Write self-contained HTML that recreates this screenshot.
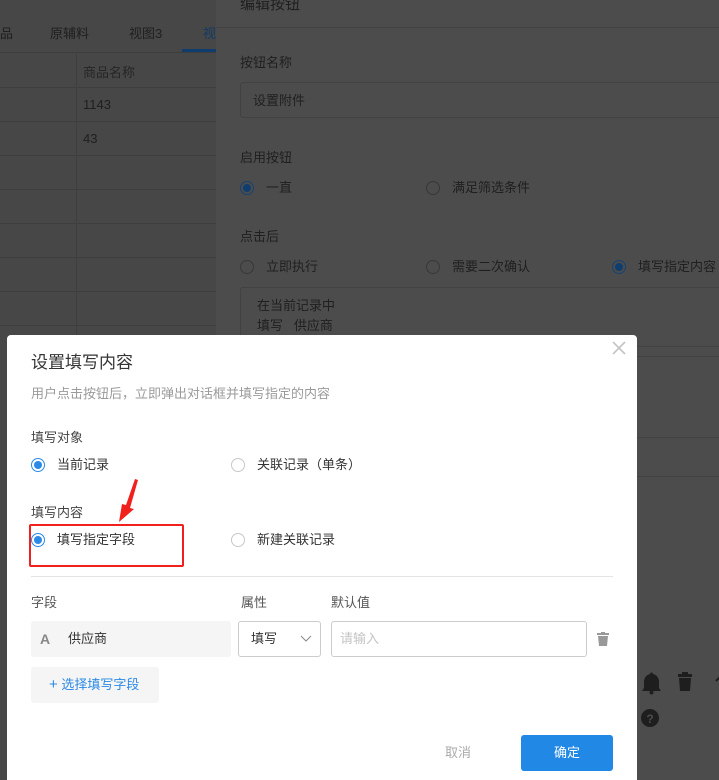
<!DOCTYPE html>
<html><head><meta charset="utf-8"><style>
*{box-sizing:border-box;margin:0;padding:0}
html,body{width:719px;height:780px;overflow:hidden;background:#474747}
body{position:relative;font-family:"Liberation Sans","Noto Sans CJK SC",sans-serif;font-size:13px;line-height:16px;color:#1f1f1f}
.a{position:absolute}
.hl{position:absolute;height:1px;background:#3e3e3e}
.rd{position:absolute;width:14px;height:14px;border-radius:50%;border:1px solid #383838;background:#4c4c4c}
.rdon{border:1px solid #154273}
.rdon:after{content:"";position:absolute;left:2px;top:2px;width:8px;height:8px;border-radius:50%;background:#0f3d6e}
.mr{position:absolute;width:14px;height:14px;border-radius:50%;border:1px solid #c8c8c8;background:#fff}
.mron{border:1px solid #2b8ae6}
.mron:after{content:"";position:absolute;left:2px;top:2px;width:8px;height:8px;border-radius:50%;background:#2b8ae6}
.m{color:#333}
</style></head><body>
<div class="a" style="left:0;top:0;width:216px;height:780px;background:#474747"></div>
<div class="a" style="left:0;top:26px;">品</div>
<div class="a" style="left:50px;top:26px;">原辅料</div>
<div class="a" style="left:129px;top:26px;">视图3</div>
<div class="a" style="left:203px;top:26px;color:#123a66">视</div>
<div class="a" style="left:182px;top:49px;width:34px;height:3px;background:#0f3d6e"></div>
<div class="hl" style="left:0;top:52px;width:216px"></div>
<div class="a" style="left:76px;top:52px;width:1px;height:290px;background:#3e3e3e"></div>
<div class="a" style="left:83px;top:65px;color:#262626">商品名称</div>
<div class="hl" style="left:0;top:87px;width:216px"></div>
<div class="a" style="left:83px;top:97px;">1143</div>
<div class="hl" style="left:0;top:121px;width:216px"></div>
<div class="a" style="left:83px;top:131px;">43</div>
<div class="hl" style="left:0;top:155px;width:216px"></div>
<div class="hl" style="left:0;top:189px;width:216px"></div>
<div class="hl" style="left:0;top:223px;width:216px"></div>
<div class="hl" style="left:0;top:257px;width:216px"></div>
<div class="hl" style="left:0;top:291px;width:216px"></div>
<div class="hl" style="left:0;top:325px;width:216px"></div>
<div class="a" style="left:216px;top:0;width:503px;height:780px;background:#4c4c4c"></div>
<div class="a" style="left:240px;top:-3px;font-size:15px;">编辑按钮</div>
<div class="hl" style="left:216px;top:27px;width:503px;background:#424242"></div>
<div class="a" style="left:240px;top:55px;">按钮名称</div>
<div class="a" style="left:240px;top:82px;width:490px;height:36px;border:1px solid #424242;border-radius:3px"></div>
<div class="a" style="left:253px;top:93px;">设置附件</div>
<div class="a" style="left:240px;top:150px;">启用按钮</div>
<div class="rd rdon" style="left:240px;top:181px"></div>
<div class="a" style="left:266px;top:180px;">一直</div>
<div class="rd" style="left:426px;top:181px"></div>
<div class="a" style="left:452px;top:180px;">满足筛选条件</div>
<div class="a" style="left:240px;top:229px;">点击后</div>
<div class="rd" style="left:240px;top:260px"></div>
<div class="a" style="left:266px;top:259px;">立即执行</div>
<div class="rd" style="left:426px;top:260px"></div>
<div class="a" style="left:452px;top:259px;">需要二次确认</div>
<div class="rd rdon" style="left:612px;top:260px"></div>
<div class="a" style="left:638px;top:259px;">填写指定内容</div>
<div class="a" style="left:240px;top:287px;width:490px;height:70px;border:1px solid #424242;border-radius:3px"></div>
<div class="a" style="left:257px;top:298px;">在当前记录中</div>
<div class="a" style="left:257px;top:318px;">填写&nbsp;&nbsp;&nbsp;供应商</div>
<div class="hl" style="left:637px;top:346px;width:82px;background:#424242"></div>
<div class="hl" style="left:637px;top:437px;width:82px;background:#424242"></div>
<div class="hl" style="left:637px;top:476px;width:82px;background:#424242"></div>
<svg class="a" style="left:640px;top:671px" width="80" height="60" viewBox="0 0 80 60">
<path d="M10 3a1.5 1.5 0 0 1 3 0c4 1 6 4 6 8v6l2 3H2l2-3v-6c0-4 2-7 6-8z" fill="#1e1e1e"/><circle cx="11.5" cy="21.5" r="2" fill="#1e1e1e"/>
<rect x="38" y="3" width="14" height="3" fill="#1e1e1e"/><rect x="42" y="1" width="6" height="2" fill="#1e1e1e"/><path d="M39 7h12l-1 13H40z" fill="#1e1e1e"/>
<path d="M76 10l4-4" stroke="#1e1e1e" stroke-width="2"/>
<circle cx="10" cy="47" r="9" fill="#1e1e1e"/><text x="10" y="52" font-size="12" font-weight="bold" text-anchor="middle" fill="#4c4c4c" font-family="Liberation Sans">?</text>
</svg>
<div class="a" style="left:7px;top:335px;width:630px;height:445px;background:#fff;border-radius:4px 4px 0 0"></div>
<svg class="a" style="left:612px;top:341px" width="14" height="14"><path d="M1 1L13 13M13 1L1 13" stroke="#c4c4c4" stroke-width="1.6"/></svg>
<div class="a m" style="left:31px;top:353px;font-size:17px;line-height:20px">设置填写内容</div>
<div class="a" style="left:31px;top:386px;color:#9a9a9a">用户点击按钮后，立即弹出对话框并填写指定的内容</div>
<div class="a" style="left:31px;top:430px;color:#444">填写对象</div>
<div class="mr mron" style="left:31px;top:458px"></div>
<div class="a m" style="left:57px;top:457px;">当前记录</div>
<div class="mr" style="left:231px;top:458px"></div>
<div class="a m" style="left:257px;top:457px;">关联记录（单条）</div>
<div class="a" style="left:31px;top:505px;color:#444">填写内容</div>
<div class="mr mron" style="left:31px;top:533px"></div>
<div class="a m" style="left:57px;top:532px;">填写指定字段</div>
<div class="mr" style="left:231px;top:533px"></div>
<div class="a m" style="left:257px;top:532px;">新建关联记录</div>
<div class="a" style="left:29px;top:524px;width:155px;height:43px;border:2px solid #f0201c;border-radius:2px"></div>
<svg class="a" style="left:110px;top:478px" width="30" height="46"><path d="M28 2L20 30l4 1L9 44 12 26l4 1L25 1z" fill="#f0201c"/></svg>
<div class="a" style="left:31px;top:576px;width:582px;height:1px;background:#e4e4e4"></div>
<div class="a" style="left:31px;top:595px;color:#555">字段</div>
<div class="a" style="left:241px;top:595px;color:#555">属性</div>
<div class="a" style="left:331px;top:595px;color:#555">默认值</div>
<div class="a" style="left:31px;top:621px;width:200px;height:36px;background:#f5f5f5;border-radius:3px"></div>
<div class="a" style="left:40px;top:631px;font-weight:bold;color:#888;font-size:14px">A</div>
<div class="a m" style="left:68px;top:631px;">供应商</div>
<div class="a" style="left:238px;top:621px;width:83px;height:36px;border:1px solid #ccc;border-radius:3px"></div>
<div class="a m" style="left:251px;top:631px;">填写</div>
<svg class="a" style="left:300px;top:635px" width="12" height="8"><path d="M1 1l5 5 5-5" stroke="#888" fill="none"/></svg>
<div class="a" style="left:331px;top:621px;width:256px;height:36px;border:1px solid #ccc;border-radius:3px"></div>
<div class="a" style="left:340px;top:631px;color:#c4c4c4">请输入</div>
<svg class="a" style="left:597px;top:632px" width="12" height="14"><rect x="0" y="1" width="12" height="2" fill="#999"/><rect x="4" y="0" width="4" height="1.5" fill="#999"/><path d="M1 4h10l-1 10H2z" fill="#999"/></svg>
<div class="a" style="left:31px;top:667px;width:128px;height:36px;background:#f5f5f5;border-radius:3px"></div>
<div class="a" style="left:49px;top:677px;color:#2b8ae6"><span style="font-size:15px">+</span> 选择填写字段</div>
<div class="a" style="left:445px;top:745px;color:#aaa">取消</div>
<div class="a" style="left:521px;top:735px;width:92px;height:36px;background:#2288e6;border-radius:3px;color:#fff;text-align:center;line-height:36px;font-size:13px">确定</div>
</body></html>
